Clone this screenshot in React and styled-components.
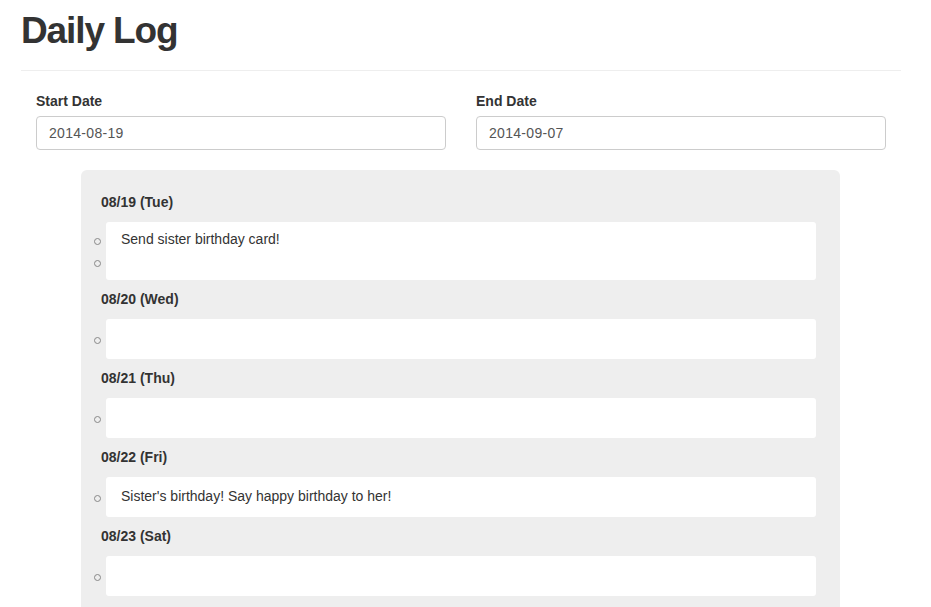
import React from "react";
import styled, { createGlobalStyle } from "styled-components";

const Global = createGlobalStyle`
  html, body { margin: 0; padding: 0; background: #fff; }
  body {
    font-family: "Liberation Sans", Arial, sans-serif;
    font-size: 14px;
    color: #333;
  }
  * { box-sizing: border-box; }
`;

const Container = styled.div`
  width: 880px;
  margin-left: 21px;
`;

const PageHeader = styled.div`
  padding-top: 11px;
  padding-bottom: 19px;
  border-bottom: 1px solid #eee;
`;

const Title = styled.h1`
  margin: 0;
  font-size: 37px;
  line-height: 40px;
  font-weight: bold;
  letter-spacing: -1.1px;
  color: #333;
`;

const Row = styled.div`
  display: grid;
  grid-template-columns: 1fr 1fr;
  padding-top: 20px;
`;

const Col = styled.div`
  padding: 0 15px;
`;

const Label = styled.label`
  display: block;
  font-weight: bold;
  font-size: 14px;
  line-height: 20px;
  margin-bottom: 5px;
`;

const Input = styled.input`
  display: block;
  width: 100%;
  height: 34px;
  padding: 6px 12px;
  border: 1px solid #ccc;
  border-radius: 4px;
  font-family: "Liberation Sans", Arial, sans-serif;
  font-size: 14px;
  letter-spacing: 0.3px;
  color: #555;
  background: #fff;
  outline: none;
`;

const Card = styled.div`
  margin: 20px 0 20px 60px;
  width: 759px;
  background: #eee;
  border-radius: 6px;
  padding: 22px 24px 20px 20px;
  display: flex;
  flex-direction: column;
  gap: 9px;
`;

const Day = styled.section``;

const DayTitle = styled.h4`
  margin: 0 0 10px;
  font-size: 14px;
  line-height: 20px;
  font-weight: bold;
  color: #333;
`;

const Entries = styled.ul`
  list-style: none;
  margin: 0 0 0 5px;
  padding: 7px 15px;
  min-height: 40px;
  background: #fff;
  border-radius: 3px;
  display: flex;
  flex-direction: column;
  justify-content: center;
`;

const Entry = styled.li`
  position: relative;
  line-height: 21px;
  min-height: 22px;
  padding-bottom: 1px;
  font-size: 14px;
  color: #333;

  &::before {
    content: "";
    position: absolute;
    left: -27px;
    top: 9px;
    width: 5px;
    height: 5px;
    border: 1px solid #888;
    border-radius: 50%;
  }
`;

const weekdays = ["Sun", "Mon", "Tue", "Wed", "Thu", "Fri", "Sat"];
const notes = {
  "08/19": ["Send sister birthday card!", ""],
  "08/22": ["Sister's birthday! Say happy birthday to her!"],
};

function buildDays() {
  const days = [];
  const d = new Date(2014, 7, 19);
  const end = new Date(2014, 8, 7);
  while (d <= end) {
    const mm = String(d.getMonth() + 1).padStart(2, "0");
    const dd = String(d.getDate()).padStart(2, "0");
    const key = `${mm}/${dd}`;
    days.push({ key, label: `${key} (${weekdays[d.getDay()]})`, items: notes[key] || [""] });
    d.setDate(d.getDate() + 1);
  }
  return days;
}

export default function App() {
  const days = buildDays();
  return (
    <>
      <Global />
      <Container>
        <PageHeader>
          <Title>Daily Log</Title>
        </PageHeader>
        <Row>
          <Col>
            <Label>Start Date</Label>
            <Input defaultValue="2014-08-19" />
          </Col>
          <Col>
            <Label>End Date</Label>
            <Input defaultValue="2014-09-07" />
          </Col>
        </Row>
        <Card>
          {days.map((day) => (
            <Day key={day.key}>
              <DayTitle>{day.label}</DayTitle>
              <Entries>
                {day.items.map((t, i) => (
                  <Entry key={i}>{t}</Entry>
                ))}
              </Entries>
            </Day>
          ))}
        </Card>
      </Container>
    </>
  );
}
